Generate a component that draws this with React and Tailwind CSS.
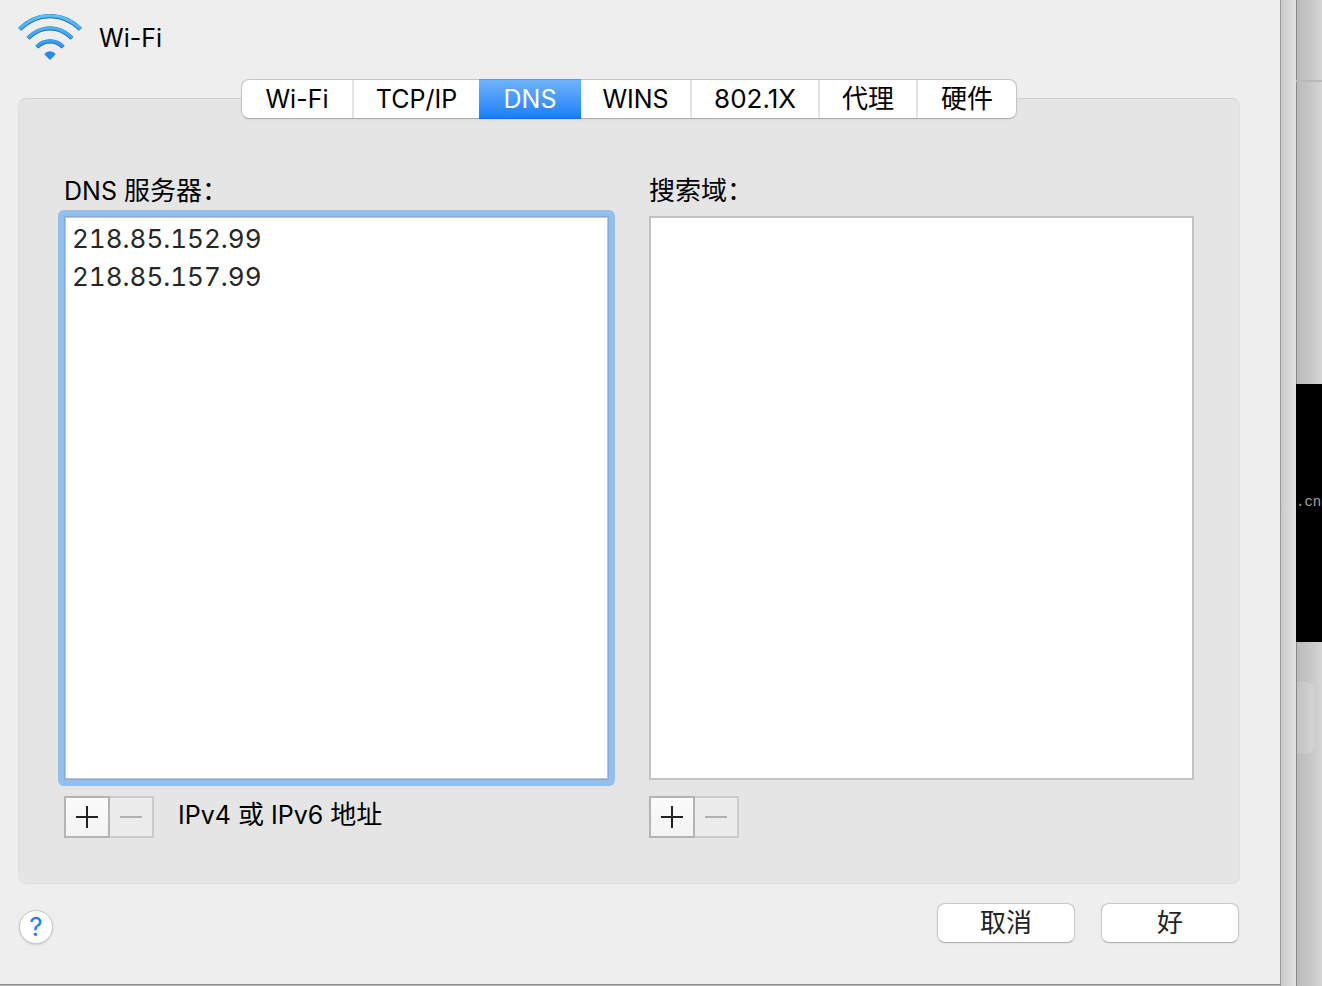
import React, { useState } from "react";

const TABS = [
  { label: "Wi-Fi", width: "w-[112px]", size: "text-[25px]" },
  { label: "TCP/IP", width: "w-[125px]", size: "text-[25px]" },
  { label: "DNS", width: "w-[102px]", size: "text-[25px]" },
  { label: "WINS", width: "w-[111px]", size: "text-[25px]" },
  { label: "802.1X", width: "w-[128px]", size: "text-[26px]" },
  { label: "代理", width: "w-[98px]", size: "text-[26px]" },
  { label: "硬件", width: "w-[98px]", size: "text-[26px]" },
];

function WifiIcon() {
  return (
    <svg width="64" height="48" viewBox="0 0 64 48" fill="none" aria-hidden="true">
      <defs>
        <linearGradient id="wifi" x1="0" y1="0" x2="0" y2="48" gradientUnits="userSpaceOnUse">
          <stop offset="0" stopColor="#5cc3fb" />
          <stop offset="1" stopColor="#1c86f5" />
        </linearGradient>
      </defs>
      <g stroke="#1f66ad" strokeWidth="4.2">
        <path d="M1.5 15.3C19 -2.4 45 -2.4 62.5 15.3" />
        <path d="M10 24.3C23 11 41 11 54 24.3" />
        <path d="M18.8 33.1C26.3 25.4 37.7 25.4 45.2 33.1" />
      </g>
      <g stroke="url(#wifi)" strokeWidth="3">
        <path d="M1.5 14.9C19 -2.8 45 -2.8 62.5 14.9" />
        <path d="M10 23.9C23 10.6 41 10.6 54 23.9" />
        <path d="M18.8 32.7C26.3 25 37.7 25 45.2 32.7" />
      </g>
      <path d="M26.8 40.2C29.5 37 34.5 37 37.2 40.2L32 45.6Z" fill="#1f8df7" stroke="#1f7ad8" strokeWidth="0.8" />
    </svg>
  );
}

// 加减按钮组
function AddRemove({ name }) {
  return (
    <div className="flex">
      <button aria-label={`${name} +`} className="flex h-[42px] w-[46px] items-center justify-center border-2 border-[#b4b4b4] bg-linear-to-b from-[#fbfbfb] to-[#f3f3f3]">
        <svg width="22" height="22" viewBox="0 0 22 22" stroke="#222" strokeWidth="2">
          <path d="M0 11H22M11 0V22" />
        </svg>
      </button>
      <button disabled aria-label={`${name} -`} className="flex h-[42px] w-11 items-center justify-center border-2 border-l-0 border-[#cbcbcb] bg-[#ececec]">
        <svg width="22" height="22" viewBox="0 0 22 22" stroke="#b0b0b0" strokeWidth="2">
          <path d="M0 11H22" />
        </svg>
      </button>
    </div>
  );
}

// 对话框后面露出的窗口
function Backdrop() {
  return (
    <>
      <div className="w-4 shrink-0 border-l border-[#999] bg-linear-to-r from-[#cacaca] to-[#e3e3e3]" />
      <div className="flex w-[26px] shrink-0 flex-col overflow-hidden bg-linear-to-r from-[#b9b9b9] to-[#d4d4d4]">
        <div className="h-20 border-l border-[#888]" />
        <div className="h-0.5 bg-[#b9b9b9]" />
        <div className="h-[302px] border-l border-[#888]" />
        <div className="flex h-[258px] items-center bg-black pb-[22px] font-['Liberation_Mono',monospace] text-[14px] leading-5 text-[#a5a5a5]">
          .cn
        </div>
        <div className="flex-1 border-l border-[#888] pt-10">
          <div className="mr-2 h-[72px] rounded-r-lg bg-linear-to-r from-[#c2c2c2] to-[#d3d3d3]" />
        </div>
      </div>
    </>
  );
}

export default function App() {
  const [active, setActive] = useState("DNS");
  const [servers, setServers] = useState("218.85.152.99\n218.85.157.99");
  const [domains, setDomains] = useState("");

  return (
    <div className="flex min-h-screen bg-[#d0d0d0] font-['Inter','Noto_Sans_CJK_SC',sans-serif] text-[25px] leading-8 text-black">
      <main className="min-w-0 flex-1 bg-[#b8b8b8]">
        <div className="border-b border-[#8c8c8c] bg-[#eee] pr-10 pl-[18px]">
          <header className="flex h-[79px] items-start gap-[17px] pt-[14px]">
            <WifiIcon />
            <h1 className="pt-2">Wi-Fi</h1>
          </header>

          <div role="tablist" className="relative z-10 mx-auto flex h-10 w-fit rounded-lg border border-[#c4c4c4] border-b-[#adadad] bg-white shadow-xs">
            {TABS.map(({ label, width, size }, i) => (
              <button
                key={label}
                role="tab"
                aria-selected={active === label}
                onClick={() => setActive(label)}
                className={`${width} ${size} flex items-center justify-center ${
                  active === label
                    ? "-my-px border-y border-t-[#559df0] border-b-[#0f68f0] bg-linear-to-b from-[#6db3fa] to-[#157efb] text-white"
                    : ""
                } ${active !== label && TABS[i + 1] && TABS[i + 1].label !== active ? "border-r-2 border-[#e3e3e3]" : ""}`}
              >
                {label}
              </button>
            ))}
          </div>

          <section className="-mt-[21px] grid grid-cols-2 gap-10 rounded-lg border border-[#dfdfdf] border-t-[#d3d3d3] bg-[#e5e5e5] px-[45px] pt-[76px] pb-[45px]">
            <div>
              <label htmlFor="servers" className="mb-[9px] block">
                DNS <span className="text-[26px]">服务器：</span>
              </label>
              <div className="-mx-1.5 -mt-1.5 rounded-md bg-[#93bfef] p-1.5">
                <textarea
                  id="servers"
                  value={servers}
                  onChange={(e) => setServers(e.target.value)}
                  className="block h-[564px] w-full resize-none border border-[#83acdc] bg-white px-[7px] pt-[3px] text-[26px] leading-[38px] text-[#262626] tabular-nums inset-shadow-[0_0_0_1px_#c4c4c4] outline-none"
                />
              </div>
              <div className="mt-[10px] flex gap-6">
                <AddRemove name="DNS 服务器" />
                <span className="pt-[3px]">
                  IPv4 <span className="text-[26px]">或</span> IPv6 <span className="text-[26px]">地址</span>
                </span>
              </div>
            </div>
            <div>
              <label htmlFor="domains" className="mb-[9px] block text-[26px]">搜索域：</label>
              <textarea
                id="domains"
                value={domains}
                onChange={(e) => setDomains(e.target.value)}
                className="mb-4 block h-[564px] w-full resize-none border-2 border-[#c3c3c3] bg-white px-1.5 pt-0.5 text-[26px] leading-[38px] outline-none"
              />
              <AddRemove name="搜索域" />
            </div>
          </section>

          <footer className="flex items-start gap-[26px] px-px pt-[19px] pb-10">
            <button aria-label="帮助" className="mt-[7px] mr-auto flex size-[34px] items-center justify-center rounded-full border border-[#c8c8c8] bg-white text-[26px] text-[#157efb] shadow-sm">
              ?
            </button>
            <button className="h-10 w-[138px] rounded-lg border border-[#c8c8c8] border-b-[#b0b0b0] bg-white text-[26px] text-[#222] shadow-xs">取消</button>
            <button className="h-10 w-[138px] rounded-lg border border-[#c8c8c8] border-b-[#b0b0b0] bg-white text-[26px] text-[#222] shadow-xs">好</button>
          </footer>
        </div>
      </main>
      <Backdrop />
    </div>
  );
}
